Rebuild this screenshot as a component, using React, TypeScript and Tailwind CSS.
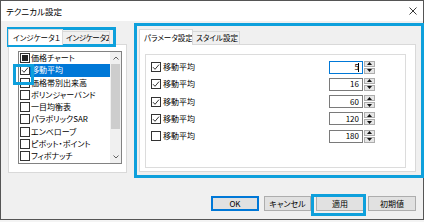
import React from "react";

const FONT = "[font-family:'Noto_Sans_CJK_JP',sans-serif] [font-feature-settings:'palt']";

function Box({ checked, indet }: { checked?: boolean; indet?: boolean }) {
  return (
    <span className="w-[10px] h-[10px] border border-[#333333] bg-white flex items-center justify-center shrink-0">
      {checked && (
        <svg width="8" height="8" viewBox="0 0 8 8">
          <path d="M1 4.2 L3 6.3 L7 1.6" stroke="#333" strokeWidth="1" fill="none" />
        </svg>
      )}
      {indet && <span className="w-[6px] h-[6px] bg-[#222222]" />}
    </span>
  );
}

const listItems = [
  "価格チャート",
  "移動平均",
  "価格帯別出来高",
  "ボリンジャーバンド",
  "一目均衡表",
  "パラボリックSAR",
  "エンベローブ",
  "ピボット・ポイント",
  "フィボナッチ",
];

const params = [
  { v: "5", c: true, focus: true },
  { v: "16", c: true },
  { v: "60", c: true },
  { v: "120", c: true },
  { v: "180", c: false },
];

function Spin() {
  return (
    <div className="flex flex-col gap-[1px] ml-[1px]">
      <div className="w-[11px] h-[6px] bg-[#e6e6e6] border border-[#adadad] flex items-center justify-center">
        <svg width="5" height="3" viewBox="0 0 5 3"><path d="M0 3 L2.5 0 L5 3 Z" fill="#111" /></svg>
      </div>
      <div className="w-[11px] h-[6px] bg-[#e6e6e6] border border-[#adadad] flex items-center justify-center">
        <svg width="5" height="3" viewBox="0 0 5 3"><path d="M0 0 L2.5 3 L5 0 Z" fill="#111" /></svg>
      </div>
    </div>
  );
}

function Btn({ label, def, w, cls }: { label: string; def?: boolean; w: string; cls?: string }) {
  return (
    <div
      className={`${w} h-[15px] bg-[#e1e1e1] border flex items-center justify-center text-[8px] leading-none text-black ${
        def ? "border-[#0078d7] shadow-[inset_0_0_0_1px_#0078d7]" : "border-[#adadad]"
      } ${cls ?? ""}`}
    >
      {label}
    </div>
  );
}

export default function App() {
  return (
    <div className={`w-[424px] h-[222px] bg-[#f4f4f4] relative overflow-hidden ${FONT} text-black`}>
      <div className="w-[424px] h-[220px] border border-[#555555] bg-[#f0f0f0] flex flex-col">
        {/* title bar */}
        <div className="h-[20px] bg-white flex items-center justify-between pl-[5px] pr-[6px] shrink-0">
          <span className="text-[8.5px] leading-none">テクニカル設定</span>
          <svg width="8" height="8" viewBox="0 0 8 8">
            <path d="M0.5 0.5 L7.5 7.5 M7.5 0.5 L0.5 7.5" stroke="#222" strokeWidth="0.9" />
          </svg>
        </div>

        {/* main */}
        <div className="flex shrink-0">
          {/* left tab control */}
          <div className="ml-[7px] mt-[8px] w-[119px] flex flex-col">
            <div className="flex items-end h-[16px]">
              <div className="w-[55px] h-[16px] bg-white border border-b-0 border-[#d9d9d9] flex items-center pl-[4px] text-[7.5px] leading-none whitespace-nowrap overflow-hidden relative z-10">
                インジケータ１
              </div>
              <div className="w-[47px] h-[14px] bg-[#f0f0f0] border border-l-0 border-[#d9d9d9] flex items-center pl-[3px] text-[7.5px] leading-none whitespace-nowrap overflow-hidden tracking-[-0.3px]">
                インジケータ2
              </div>
            </div>
            <div className="h-[129px] bg-white border border-[#d9d9d9] -mt-[1px] pl-[9px] pt-[6px]">
              <div className="w-[104px] h-[113px] border border-[#828282] bg-white flex">
                <div className="flex-1 flex flex-col">
                  {listItems.map((t, i) => (
                    <div key={t} className="h-[12.25px] flex items-center pl-[1px] shrink-0">
                      <Box checked={i === 1} indet={i === 0} />
                      <span
                        className={`flex-1 h-full flex items-center pl-[1px] text-[8px] leading-none whitespace-nowrap ${
                          i === 1 ? "bg-[#0078d7] text-white" : ""
                        }`}
                      >
                        {t}
                      </span>
                    </div>
                  ))}
                </div>
                <div className="w-[11px] bg-[#f0f0f0] flex flex-col items-center">
                  <div className="h-[12px] flex items-center justify-center">
                    <svg width="6" height="4" viewBox="0 0 6 4"><path d="M0.5 3.5 L3 1 L5.5 3.5" stroke="#606060" strokeWidth="1" fill="none" /></svg>
                  </div>
                  <div className="w-[9px] h-[65px] bg-[#cdcdcd]" />
                  <div className="flex-1" />
                  <div className="h-[12px] flex items-center justify-center">
                    <svg width="6" height="4" viewBox="0 0 6 4"><path d="M0.5 0.5 L3 3 L5.5 0.5" stroke="#606060" strokeWidth="1" fill="none" /></svg>
                  </div>
                </div>
              </div>
            </div>
          </div>

          {/* right tab control */}
          <div className="ml-[12px] mt-[8px] w-[277px] flex flex-col">
            <div className="flex items-end h-[16px]">
              <div className="w-[54px] h-[16px] bg-white border border-b-0 border-[#d9d9d9] flex items-center pl-[4px] text-[7.5px] leading-none whitespace-nowrap overflow-hidden relative z-10">
                パラメータ設定
              </div>
              <div className="w-[47px] h-[14px] bg-[#f0f0f0] border border-l-0 border-[#d9d9d9] flex items-center pl-[3px] text-[7.5px] leading-none whitespace-nowrap overflow-hidden">
                スタイル設定
              </div>
            </div>
            <div className="h-[128px] bg-white border border-[#d9d9d9] -mt-[1px] pl-[5px] pt-[9px]">
              <div className="w-[261px] h-[114px] border border-[#dcdcdc] bg-white pt-[3.5px] pl-[5px] pr-[30px] flex flex-col">
                {params.map((p, i) => (
                  <div key={i} className="h-[17.25px] flex items-center shrink-0">
                    <Box checked={p.c} />
                    <span className="ml-[2px] text-[8px] leading-none">移動平均</span>
                    <div className="flex-1" />
                    <div
                      className={`w-[34px] h-[13px] border bg-white flex items-center justify-end pr-[3px] text-[8px] leading-none ${
                        p.focus ? "border-[#0078d7]" : "border-[#7a7a7a]"
                      }`}
                    >
                      {p.v}
                      {p.focus && <span className="w-[1px] h-[9px] bg-black ml-[-1px]" />}
                    </div>
                    <Spin />
                  </div>
                ))}
              </div>
            </div>
          </div>
        </div>

        {/* buttons */}
        <div className="flex justify-end pr-[7px] mt-[23px]">
          <Btn label="OK" def w="w-[48px]" />
          <Btn label="キャンセル" w="w-[47px]" cls="ml-[5px]" />
          <Btn label="適用" w="w-[48px]" cls="ml-[5px]" />
          <Btn label="初期値" w="w-[48px]" cls="ml-[4px]" />
        </div>
      </div>

      {/* annotation highlight overlays */}
      <div className="absolute left-[7px] top-[27px] w-[109px] h-[20px] border-[3px] border-[#0ea0dc]" />
      <div className="absolute left-[13px] top-[64px] w-[21px] h-[21px] border-[3px] border-[#0ea0dc]" />
      <div className="absolute left-[134px] top-[23px] w-[290px] h-[155px] border-[3px] border-[#0ea0dc]" />
      <div className="absolute left-[311px] top-[194px] w-[55px] h-[22px] border-[3px] border-[#0ea0dc]" />
    </div>
  );
}
